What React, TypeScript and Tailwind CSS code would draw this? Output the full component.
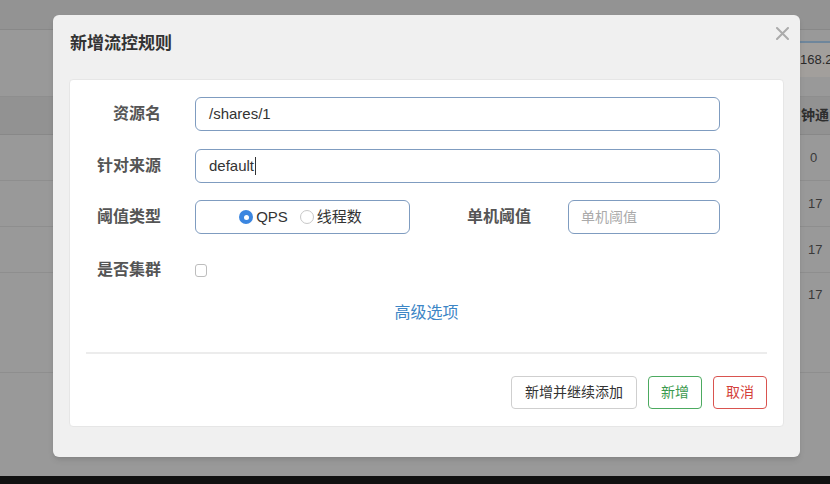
import React from "react";

const font = { fontFamily: '"Liberation Sans", "Noto Sans CJK SC", sans-serif' };

export default function App() {
  return (
    <div className="relative w-[830px] h-[484px] overflow-hidden bg-[#999999]" style={font}>
      <div className="flex flex-col w-full bg-[#999999]">
        <div className="h-[30px] w-full bg-[#939393] border-b border-[#888888]" />
        <div className="h-[67px] w-full flex justify-end bg-[#999999] border-b border-[#8e8e8e]">
          <div className="w-[30px] h-[36px] mt-[11px] bg-[#a29f9c] border-t-2 border-[#6f869b] flex items-center text-[13px] text-[#2a2a2a] overflow-hidden whitespace-nowrap">
            168.2
          </div>
        </div>
        <div className="h-[38px] w-full flex items-center justify-end bg-[#929292] border-b border-[#888888]">
          <div className="w-[30px] text-[14px] font-bold text-[#2e2e2e] pl-[1px] whitespace-nowrap">钟通</div>
        </div>
        <div className="h-[46px] w-full flex items-center justify-end bg-[#999999] border-b border-[#8e8e8e]">
          <div className="w-[30px] text-[13px] text-[#3a3a3a] pl-[10px]">0</div>
        </div>
        <div className="h-[46px] w-full flex items-center justify-end bg-[#999999] border-b border-[#8e8e8e]">
          <div className="w-[30px] text-[13px] text-[#3a3a3a] pl-[8px]">17</div>
        </div>
        <div className="h-[46px] w-full flex items-center justify-end bg-[#999999] border-b border-[#8e8e8e]">
          <div className="w-[30px] text-[13px] text-[#3a3a3a] pl-[8px]">17</div>
        </div>
        <div className="h-[100px] w-full flex justify-end bg-[#999999] border-b border-[#8e8e8e]">
          <div className="w-[30px] text-[13px] text-[#3a3a3a] pl-[8px] mt-[12px]">17</div>
        </div>
      </div>
      <div className="absolute left-0 right-0 bottom-0 h-[8px] bg-[#111111]" />

      <div className="absolute left-[53px] top-[15px] w-[747px] h-[442px] bg-[#f0f0f0] rounded-[6px] shadow-md flex flex-col px-[16px]">
        <div className="h-[64px] flex items-start justify-between">
          <div className="text-[17px] font-bold text-[#333333] mt-[16px] ml-[1px]">新增流控规则</div>
          <svg width="13" height="13" viewBox="0 0 13 13" className="mt-[12px] -mr-[5px]">
            <path d="M1 1 L12 12 M12 1 L1 12" stroke="#ababab" strokeWidth="2" strokeLinecap="round" />
          </svg>
        </div>
        <div className="bg-white rounded-[4px] border border-[#e6e6e6] h-[348px] flex flex-col pt-[17px] px-[16px]">
          <div className="flex items-center h-[34px]">
            <div className="w-[75px] text-right text-[16px] font-semibold text-[#555555]">资源名</div>
            <div className="ml-[34px] w-[525px] h-[34px] rounded-[6px] border border-[#7f9cc0] flex items-center px-[13px] text-[15px] text-[#333333]">
              /shares/1
            </div>
          </div>
          <div className="flex items-center h-[34px] mt-[18px]">
            <div className="w-[75px] text-right text-[16px] font-semibold text-[#555555]">针对来源</div>
            <div className="ml-[34px] w-[525px] h-[34px] rounded-[6px] border border-[#7f9cc0] flex items-center px-[13px] text-[15px] text-[#333333]">
              default<span className="w-[1px] h-[18px] bg-[#333333] ml-[1px]" />
            </div>
          </div>
          <div className="flex items-center h-[34px] mt-[17px]">
            <div className="w-[75px] text-right text-[16px] font-semibold text-[#555555]">阈值类型</div>
            <div className="ml-[34px] w-[215px] h-[34px] rounded-[6px] border border-[#7f9cc0] flex items-center justify-center text-[15px] text-[#333333] pr-[4px]">
              <span className="w-[14px] h-[14px] rounded-full bg-[#3b86e0] flex items-center justify-center">
                <span className="w-[5px] h-[5px] rounded-full bg-white" />
              </span>
              <span className="ml-[3px]">QPS</span>
              <span className="ml-[12px] w-[14px] h-[14px] rounded-full border border-[#c8c8c8] bg-white" />
              <span className="ml-[3px]">线程数</span>
            </div>
            <div className="ml-[57px] w-[68px] text-[16px] font-semibold text-[#555555]">单机阈值</div>
            <div className="ml-[33px] w-[152px] h-[34px] rounded-[6px] border border-[#7f9cc0] flex items-center px-[12px] text-[14px] text-[#aaaaaa]">
              单机阈值
            </div>
          </div>
          <div className="flex items-center h-[34px] mt-[19px]">
            <div className="w-[75px] text-right text-[16px] font-semibold text-[#555555]">是否集群</div>
            <span className="ml-[34px] w-[12px] h-[13px] rounded-[3px] border border-[#bdbdbd] bg-white" />
          </div>
          <div className="flex justify-center mt-[13px] h-[26px] items-center">
            <span className="text-[16px] text-[#3d86c6]">高级选项</span>
          </div>
          <div className="mt-[26px] h-[2px] bg-[#ececec]" />
          <div className="flex justify-end gap-[11px] mt-[22px]">
            <div className="h-[33px] px-[13px] rounded-[4px] border border-[#cfcfcf] bg-white text-[14px] text-[#333333] flex items-center">新增并继续添加</div>
            <div className="h-[33px] px-[12px] rounded-[4px] border border-[#4caa60] bg-white text-[14px] text-[#3a9a4e] flex items-center">新增</div>
            <div className="h-[33px] px-[12px] rounded-[4px] border border-[#d9534f] bg-white text-[14px] text-[#d43f3a] flex items-center">取消</div>
          </div>
        </div>
      </div>
    </div>
  );
}
